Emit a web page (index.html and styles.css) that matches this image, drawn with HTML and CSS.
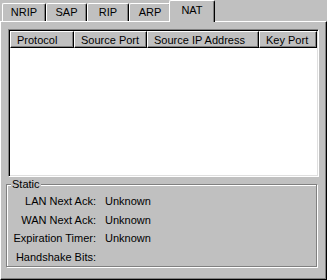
FILE: index.html
```html
<!DOCTYPE html>
<html>
<head>
<meta charset="utf-8">
<link rel="stylesheet" href="styles.css">
</head>
<body>
<div class="window">
  <div class="tabs">
    <div class="tab t-nrip">NRIP</div>
    <div class="tab t-sap">SAP</div>
    <div class="tab t-rip">RIP</div>
    <div class="tab t-arp">ARP</div>
    <div class="tab t-nat active">NAT</div>
  </div>
  <div class="panel">
    <div class="list">
      <div class="header">
        <div class="col c-proto">Protocol</div>
        <div class="col c-sport">Source Port</div>
        <div class="col c-sip">Source IP Address</div>
        <div class="col c-key">Key Port</div>
      </div>
      <div class="list-body"></div>
    </div>
    <div class="group">
      <div class="legend">Static</div>
      <div class="grid">
        <span class="label">LAN Next Ack:</span><span class="value">Unknown</span>
        <span class="label">WAN Next Ack:</span><span class="value">Unknown</span>
        <span class="label">Expiration Timer:</span><span class="value">Unknown</span>
        <span class="label">Handshake Bits:</span><span class="value"></span>
      </div>
    </div>
  </div>
</div>
</body>
</html>
```

FILE: styles.css
```css
html, body {
  margin: 0;
  padding: 0;
  background: #c0c0c0;
}
body {
  font: 11px "Liberation Sans", Arial, sans-serif;
  color: #000;
}
.window {
  width: 327px;
  height: 280px;
  display: flex;
  flex-direction: column;
  box-sizing: border-box;
}
.tabs {
  display: flex;
  align-items: flex-end;
  height: 21px;
  padding-left: 2px;
  position: relative;
  z-index: 2;
  flex: none;
}
.tab {
  box-sizing: border-box;
  height: 18px;
  border-top: 1px solid #fff;
  border-left: 1px solid #fff;
  border-right: 1px solid #000;
  border-radius: 2px 2px 0 0;
  box-shadow: inset -1px 0 0 #808080;
  display: flex;
  align-items: center;
  justify-content: center;
  padding-bottom: 1px;
  background: #c0c0c0;
}
.t-nrip { width: 44px; }
.t-sap { width: 41px; }
.t-rip { width: 42px; }
.t-arp { width: 42px; }
.t-nat { width: 42px; }
.tab.active {
  height: 22px;
  margin: 0 -2px -1px -2px;
  width: 46px;
  padding-bottom: 4px;
  position: relative;
  z-index: 3;
}
.panel {
  flex: 1;
  box-sizing: border-box;
  border-top: 1px solid #fff;
  border-left: 1px solid #fff;
  border-right: 1px solid #000;
  border-bottom: 1px solid #000;
  box-shadow: inset -1px -1px 0 #808080;
  padding: 7px 7px 0 7px;
  display: flex;
  flex-direction: column;
}
.list {
  box-sizing: border-box;
  width: 311px;
  height: 148px;
  border-top: 1px solid #808080;
  border-left: 1px solid #808080;
  border-right: 1px solid #fff;
  border-bottom: 1px solid #fff;
  box-shadow: inset 1px 1px 0 #000, inset -1px -1px 0 #dfdfdf;
  background: #fff;
  padding: 1px 1px 1px 1px;
  display: flex;
  flex-direction: column;
}
.header {
  display: flex;
  height: 17px;
  flex: none;
}
.col {
  box-sizing: border-box;
  height: 17px;
  background: #c0c0c0;
  border-top: 1px solid #fff;
  border-left: 1px solid #fff;
  border-right: 1px solid #000;
  border-bottom: 1px solid #000;
  box-shadow: inset -1px -1px 0 #808080;
  padding-left: 6px;
  display: flex;
  align-items: center;
  white-space: nowrap;
  overflow: hidden;
}
.c-proto { width: 64px; }
.c-sport { width: 73px; }
.c-sip { width: 112px; }
.c-key { width: 58px; }
.list-body {
  flex: 1;
}
.group {
  position: relative;
  box-sizing: border-box;
  margin: 7px 0 0 -2px;
  width: 311px;
  height: 83px;
  border: 1px solid #808080;
  box-shadow: inset 1px 1px 0 #fff, 1px 1px 0 #fff;
  padding-top: 7px;
}
.legend {
  position: absolute;
  top: -7px;
  left: 4px;
  background: #c0c0c0;
  padding: 0 1px;
  line-height: 13px;
}
.grid {
  display: grid;
  grid-template-columns: 89px auto;
  column-gap: 9px;
  grid-auto-rows: 18.5px;
  align-items: center;
}
.label {
  text-align: right;
  white-space: nowrap;
}
.value {
  white-space: nowrap;
}
```
